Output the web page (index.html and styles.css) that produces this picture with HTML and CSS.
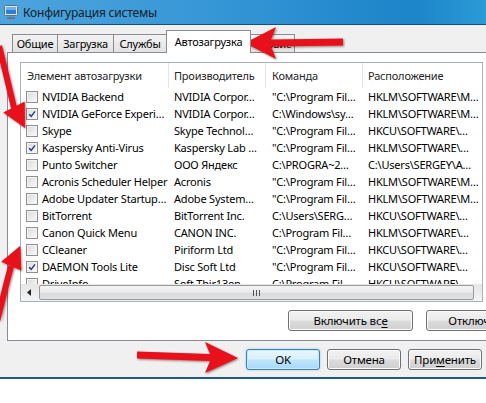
FILE: index.html
```html
<!DOCTYPE html>
<html>
<head>
<meta charset="utf-8">
<title>Конфигурация системы</title>
<link rel="stylesheet" href="styles.css">
</head>
<body>
<div class="window">
  <div class="titlebar">
    <svg class="appicon" width="14" height="14" viewBox="0 0 14 14">
      <rect x="0.5" y="0.5" width="13" height="10" rx="1" fill="#dfe8f2" stroke="#5a6f86"/>
      <rect x="2" y="2" width="10" height="7" fill="#2f7fd0"/>
      <rect x="2" y="2" width="10" height="3" fill="#6cb2ee"/>
      <rect x="5" y="11" width="4" height="1.5" fill="#7c8a99"/>
      <rect x="3" y="12.5" width="8" height="1.5" fill="#5a6f86"/>
    </svg>
    <span class="title">Конфигурация системы</span>
  </div>
  <div class="client">
    <div class="tabs">
      <div class="tab t1">Общие</div>
      <div class="tab t2">Загрузка</div>
      <div class="tab t3">Службы</div>
      <div class="tab active">Автозагрузка</div>
      <div class="tab t5">Сервис</div>
    </div>
    <div class="panel">
      <div class="list">
        <div class="lhead">
          <div class="hc c1">Элемент автозагрузки</div>
          <div class="hc c2">Производитель</div>
          <div class="hc c3">Команда</div>
          <div class="hc c4">Расположение</div>
        </div>
        <div class="lbody">
          <div class="row"><div class="c c1"><span class="cb"></span>NVIDIA Backend</div><div class="c c2">NVIDIA Corpor…</div><div class="c c3">"C:\Program Fil…</div><div class="c c4">HKLM\SOFTWARE\M…</div></div>
          <div class="row"><div class="c c1"><span class="cb on"><svg viewBox="0 0 12 12"><path d="M2.6 6.2 L5 8.8 L9.6 2.8"/></svg></span>NVIDIA GeForce Experi…</div><div class="c c2">NVIDIA Corpor…</div><div class="c c3">C:\Windows\sy…</div><div class="c c4">HKLM\SOFTWARE\M…</div></div>
          <div class="row"><div class="c c1"><span class="cb"></span>Skype</div><div class="c c2">Skype Technol…</div><div class="c c3">"C:\Program Fil…</div><div class="c c4">HKCU\SOFTWARE\…</div></div>
          <div class="row"><div class="c c1"><span class="cb on"><svg viewBox="0 0 12 12"><path d="M2.6 6.2 L5 8.8 L9.6 2.8"/></svg></span>Kaspersky Anti-Virus</div><div class="c c2">Kaspersky Lab …</div><div class="c c3">"C:\Program Fil…</div><div class="c c4">HKLM\SOFTWARE\…</div></div>
          <div class="row"><div class="c c1"><span class="cb"></span>Punto Switcher</div><div class="c c2">ООО Яндекс</div><div class="c c3">C:\PROGRA~2…</div><div class="c c4">C:\Users\SERGEY\A…</div></div>
          <div class="row"><div class="c c1"><span class="cb"></span>Acronis Scheduler Helper</div><div class="c c2">Acronis</div><div class="c c3">"C:\Program Fil…</div><div class="c c4">HKLM\SOFTWARE\M…</div></div>
          <div class="row"><div class="c c1"><span class="cb"></span>Adobe Updater Startup…</div><div class="c c2">Adobe System…</div><div class="c c3">"C:\Program Fil…</div><div class="c c4">HKLM\SOFTWARE\M…</div></div>
          <div class="row"><div class="c c1"><span class="cb"></span>BitTorrent</div><div class="c c2">BitTorrent Inc.</div><div class="c c3">C:\Users\SERG…</div><div class="c c4">HKCU\SOFTWARE\…</div></div>
          <div class="row"><div class="c c1"><span class="cb"></span>Canon Quick Menu</div><div class="c c2">CANON INC.</div><div class="c c3">C:\Program Fil…</div><div class="c c4">HKLM\SOFTWARE\…</div></div>
          <div class="row"><div class="c c1"><span class="cb"></span>CCleaner</div><div class="c c2">Piriform Ltd</div><div class="c c3">"C:\Program Fil…</div><div class="c c4">HKCU\SOFTWARE\…</div></div>
          <div class="row"><div class="c c1"><span class="cb on"><svg viewBox="0 0 12 12"><path d="M2.6 6.2 L5 8.8 L9.6 2.8"/></svg></span>DAEMON Tools Lite</div><div class="c c2">Disc Soft Ltd</div><div class="c c3">"C:\Program Fil…</div><div class="c c4">HKCU\SOFTWARE\…</div></div>
          <div class="row"><div class="c c1"><span class="cb"></span>DriveInfo</div><div class="c c2">Soft Thir13en</div><div class="c c3">C:\Program Fil…</div><div class="c c4">HKCU\SOFTWARE\…</div></div>
        </div>
        <div class="hscroll">
          <div class="sarrow"><svg width="5" height="7" viewBox="0 0 5 7"><path d="M4 0 L0 3.5 L4 7 Z" fill="#222"/></svg></div>
          <div class="thumb"><span class="grip"></span><span class="grip"></span><span class="grip"></span></div>
        </div>
      </div>
      <div class="pbtns">
        <div class="btn wide">Включить вс<u>е</u></div>
        <div class="btn wide">Отключить все</div>
      </div>
    </div>
    <div class="dbtns">
      <div class="btn dlg ok">OK</div>
      <div class="btn dlg">Отмена</div>
      <div class="btn dlg">При<u>м</u>енить</div>
    </div>
  </div>
</div>
<svg class="arrows" width="486" height="403" viewBox="0 0 486 403">
  <g fill="#e8111b">
    <polygon points="245,43 276,27 271,39.5 343,38.5 343,45.5 271,46.5 276,59"/>
    <polygon points="137,351.5 210,354 205,342 238,358 205,373 210,361 137,358.5"/>
    <polygon points="25,128 24.7,101.6 3.3,112.4"/>
    <polygon points="20,246 21.3,270.6 1.1,261.8"/>
  </g>
  <g fill="none" stroke="#e8111b" stroke-width="6" stroke-linecap="butt">
    <path d="M-1 46 Q 7 78 14 108"/>
    <path d="M11 266 Q 4 292 -3 322"/>
  </g>
</svg>
</body>
</html>
```

FILE: styles.css
```css
* { box-sizing: border-box; }
html, body { margin: 0; padding: 0; }
body {
  width: 486px;
  height: 403px;
  overflow: hidden;
  background: #ffffff;
  position: relative;
  font-family: "Noto Sans", "Open Sans", sans-serif;
  font-size: 11px;
  letter-spacing: -0.2px;
  color: #000;
}
.window {
  width: 486px;
  height: 379px;
  display: flex;
  flex-direction: column;
  border-bottom: 2px solid #1d5a8a;
}
.titlebar {
  height: 25px;
  flex: none;
  border-bottom: 1px solid #14507e;
  background: linear-gradient(to right, #4ea4dd 0%, #3596d6 45%, #1c84c9 85%, #2a9bd6 100%);
  display: flex;
  align-items: center;
  padding-left: 4px;
  gap: 5px;
}
.appicon { flex: none; }
.title { font-size: 12px; color: #111d29; }
.client {
  flex: 1;
  background: #f0f0f0;
  padding: 5px 0 0 7px;
  display: flex;
  flex-direction: column;
}
.tabs {
  display: flex;
  align-items: flex-end;
  height: 22px;
  padding-left: 5px;
  flex: none;
}
.tab {
  height: 18px;
  border: 1px solid #898c95;
  border-bottom: none;
  background: linear-gradient(#f3f3f3, #e2e2e2);
  display: flex;
  align-items: center;
  justify-content: center;
  margin-right: -1px;
  white-space: nowrap;
  overflow: hidden;
}
.t1 { width: 46px; }
.t2 { width: 57px; }
.t3 { width: 54px; }
.t5 { width: 45px; }
.tab.active {
  width: 85px;
  height: 23px;
  margin-bottom: -1px;
  background: #ffffff;
  position: relative;
  z-index: 2;
  padding-bottom: 2px;
}
.panel {
  width: 484px;
  height: 289px;
  flex: none;
  border: 1px solid #898c95;
  background: #ffffff;
  padding: 9px 0 0 12px;
}
.list {
  width: 463px;
  height: 240px;
  border: 1px solid #a9b0b8;
  background: #fff;
  display: flex;
  flex-direction: column;
  overflow: hidden;
}
.lhead { height: 25px; flex: none; display: flex; }
.hc {
  display: flex;
  align-items: center;
  border-right: 1px solid #e3e5e8;
  color: #262626;
  white-space: nowrap;
  overflow: hidden;
  flex: none;
}
.lbody { height: 196px; flex: none; overflow: hidden; }
.row { height: 17px; display: flex; align-items: center; white-space: nowrap; }
.c { overflow: hidden; flex: none; display: flex; align-items: center; }
.c1 { width: 148px; padding-left: 5px; }
.hc.c1 { padding-left: 6px; }
.c2 { width: 97px; padding-left: 5px; }
.c3 { width: 97px; padding-left: 6px; }
.c4 { flex: 1; padding-left: 5px; border-right: none; }
.cb {
  width: 12px;
  height: 12px;
  flex: none;
  margin-right: 4px;
  border: 1px solid #8f8f8f;
  background: linear-gradient(135deg, #dadada, #fbfbfb);
  box-shadow: inset 0 0 0 1px #f4f4f4;
  display: flex;
}
.cb svg { width: 10px; height: 10px; }
.cb path { fill: none; stroke: #21407f; stroke-width: 1.8; }
.hscroll {
  height: 17px;
  flex: none;
  display: flex;
  align-items: center;
  background: linear-gradient(#e6e6e6, #f4f4f4);
}
.sarrow {
  width: 17px;
  height: 17px;
  flex: none;
  display: flex;
  align-items: center;
  justify-content: center;
}
.thumb {
  margin-left: 1px;
  width: 435px;
  height: 15px;
  flex: none;
  border: 1px solid #9a9a9a;
  border-radius: 2px;
  background: linear-gradient(#f4f4f4 0%, #e9e9e9 50%, #d9d9d9 51%, #e2e2e2 100%);
  display: flex;
  align-items: center;
  justify-content: center;
  gap: 2px;
}
.grip { width: 1px; height: 6px; background: #555; }
.pbtns {
  display: flex;
  gap: 13px;
  margin-top: 8px;
  padding-left: 268px;
}
.btn {
  height: 21px;
  flex: none;
  border: 1px solid #707070;
  border-radius: 3px;
  background: linear-gradient(#f2f2f2 0%, #ebebeb 48%, #dcdcdc 52%, #cfcfcf 100%);
  box-shadow: inset 0 0 0 1px #fbfbfb;
  display: flex;
  align-items: center;
  justify-content: center;
  font-size: 11.5px;
  white-space: nowrap;
}
.btn u { text-underline-offset: 2px; }
.wide { width: 125px; }
.dbtns {
  display: flex;
  gap: 7px;
  margin-top: 8px;
  padding-left: 239px;
}
.dlg { width: 74px; }
.ok {
  border-color: #3c7fb1;
  background: linear-gradient(#eaf6fd 0%, #d9f0fc 48%, #bee6fd 52%, #a7d9f5 100%);
  box-shadow: inset 0 0 0 1px #c9eafc, 0 0 2px #7fc3ec;
}
.arrows {
  position: absolute;
  left: 0;
  top: 0;
  pointer-events: none;
  filter: drop-shadow(1px 1px 1px rgba(60, 0, 0, 0.5));
}
```
